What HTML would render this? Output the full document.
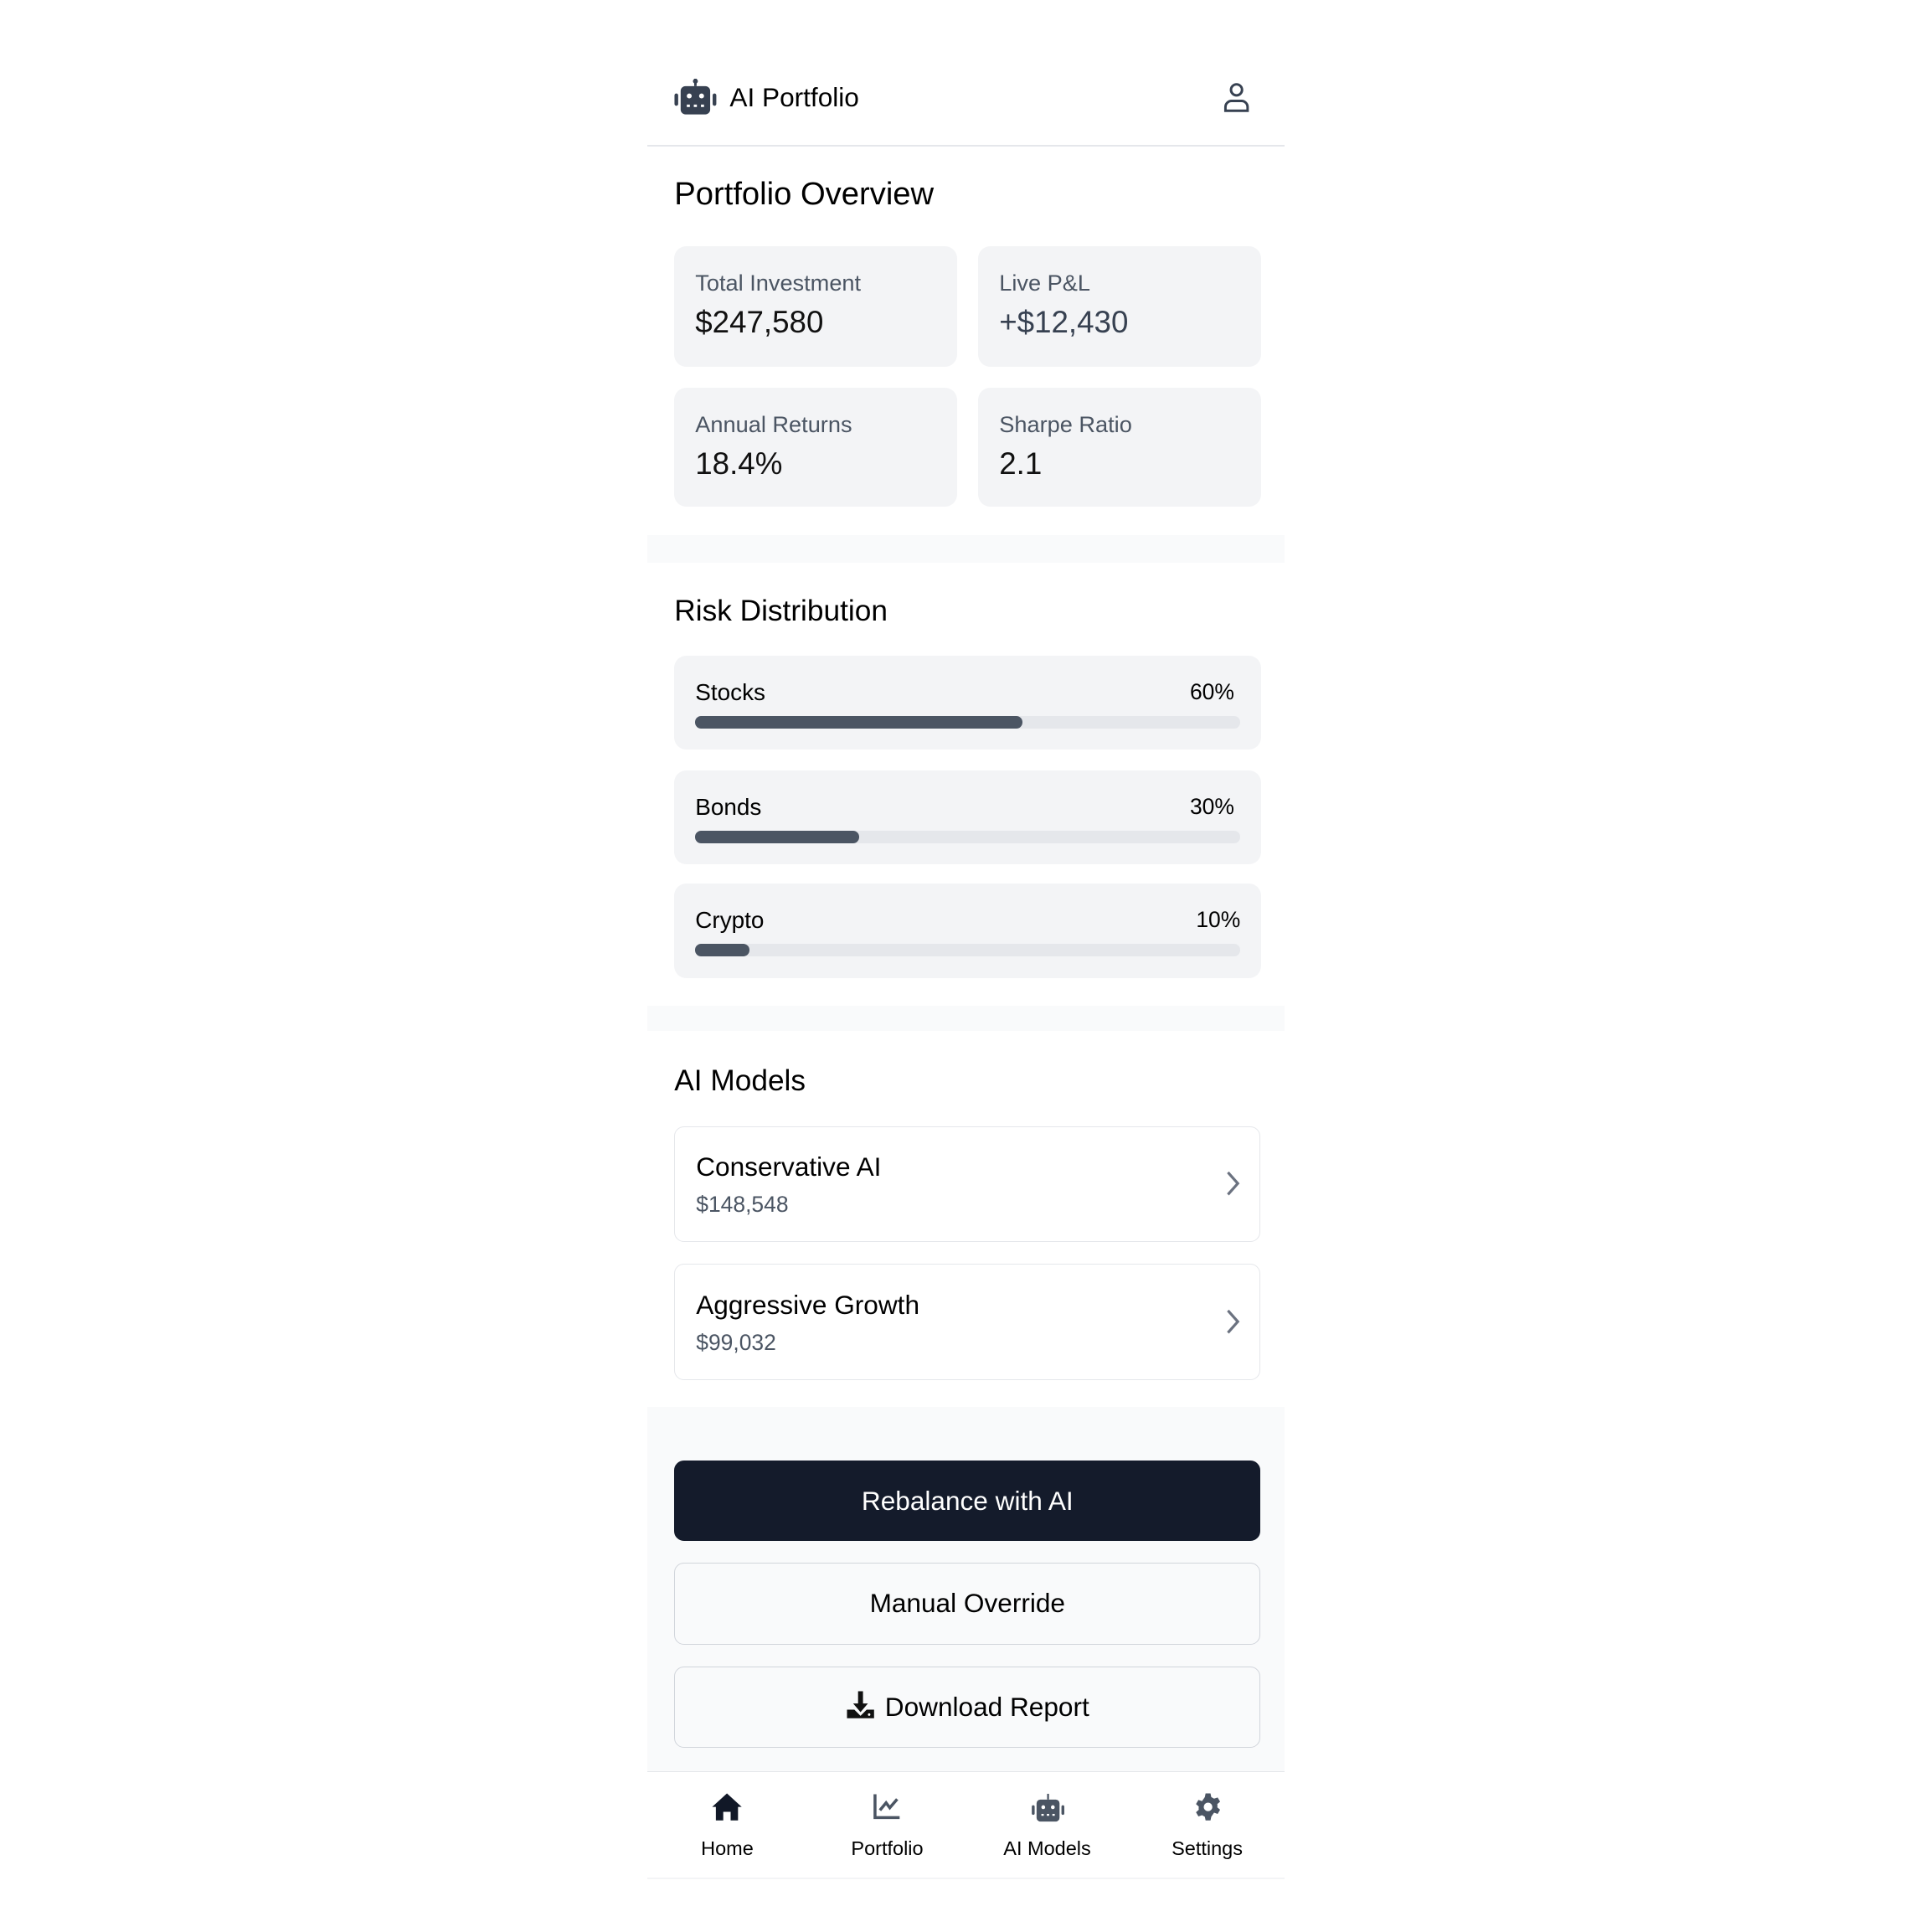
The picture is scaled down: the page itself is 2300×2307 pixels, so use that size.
<!DOCTYPE html>
<html><head><meta charset="utf-8"><style>
html,body{margin:0;padding:0;background:#fff;width:2300px;height:2300px;overflow:hidden}
#w{position:absolute;left:0;top:0;width:1570px;height:1570px;zoom:1.4695;font-family:"Liberation Sans",sans-serif;color:#111827}
.a{position:absolute}
.card{position:absolute;background:#f3f4f6;border-radius:10px}
.lbl{position:absolute;left:17px;top:19px;font-size:18.5px;color:#4b5563}
.val{position:absolute;left:17px;top:48px;font-size:25px;color:#111}
.h2{position:absolute;left:548px;font-size:25px;color:#000}
.band{position:absolute;left:526px;width:518px;background:#f9fafb}
.bar{position:absolute;left:17px;right:17px;top:49px;height:10px;border-radius:5px;background:#e5e7eb}
.bar i{display:block;height:10px;border-radius:5px;background:#4b5563}
.bl{position:absolute;left:17px;top:19px;font-size:19px;color:#000}
.bp{position:absolute;right:22px;top:19px;font-size:18px;color:#000}
.mc{position:absolute;left:548px;width:475px;height:93px;border:1px solid #e5e7eb;border-radius:8px;background:#fff}
.mn{position:absolute;left:17px;top:20px;font-size:21.5px;color:#000}
.mp{position:absolute;left:17px;top:53px;font-size:18px;color:#4b5563}
.btn{position:absolute;left:548px;width:475px;height:65px;border:1px solid #d1d5db;border-radius:8px;background:#f9fafb;text-align:center;line-height:65px;font-size:21.5px;color:#000}
.nl{position:absolute;top:1493px;font-size:16px;color:#000;width:130px;text-align:center}
</style></head><body><div id="w">
<div class="a" style="left:526px;top:118px;width:518px;height:1px;background:#e5e7eb"></div>
<svg class="a" style="left:547px;top:64px" width="36" height="30" viewBox="0 0 36 30"><rect x="17" y="0" width="2" height="6" fill="#374151"/><circle cx="18" cy="2" r="2" fill="#374151"/><rect x="6" y="6" width="24" height="23" rx="4" fill="#374151"/><rect x="1" y="12" width="3" height="10" rx="1.5" fill="#374151"/><rect x="32" y="12" width="3" height="10" rx="1.5" fill="#374151"/><circle cx="13" cy="14" r="2" fill="#fff"/><circle cx="23" cy="14" r="2" fill="#fff"/><rect x="11" y="21" width="2.5" height="2" fill="#fff"/><rect x="16.7" y="21" width="2.5" height="2" fill="#fff"/><rect x="22.5" y="21" width="2.5" height="2" fill="#fff"/></svg>
<div class="a" style="left:593px;top:67px;font-size:21.5px;color:#000">AI Portfolio</div>
<svg class="a" style="left:993px;top:66px" width="24" height="26" viewBox="0 0 24 26" fill="none" stroke="#374151" stroke-width="2"><circle cx="12" cy="7" r="4.5"/><path d="M3 24v-3a5 5 0 0 1 5-5h8a5 5 0 0 1 5 5v3z"/></svg>
<div class="h2" style="top:143px;font-size:26px">Portfolio Overview</div>
<div class="card" style="left:548px;top:200px;width:230px;height:98px"><div class="lbl">Total Investment</div><div class="val">$247,580</div></div>
<div class="card" style="left:795px;top:200px;width:230px;height:98px"><div class="lbl">Live P&amp;L</div><div class="val" style="color:#374151">+$12,430</div></div>
<div class="card" style="left:548px;top:315px;width:230px;height:97px"><div class="lbl">Annual Returns</div><div class="val">18.4%</div></div>
<div class="card" style="left:795px;top:315px;width:230px;height:97px"><div class="lbl">Sharpe Ratio</div><div class="val">2.1</div></div>
<div class="band" style="top:435px;height:22px"></div>
<div class="h2" style="top:483px;font-size:24px">Risk Distribution</div>
<div class="card" style="left:548px;top:533px;width:477px;height:76px"><div class="bl">Stocks</div><div class="bp">60%</div><div class="bar"><i style="width:60%"></i></div></div>
<div class="card" style="left:548px;top:626px;width:477px;height:76px"><div class="bl">Bonds</div><div class="bp">30%</div><div class="bar"><i style="width:30%"></i></div></div>
<div class="card" style="left:548px;top:718px;width:477px;height:77px"><div class="bl">Crypto</div><div class="bp" style="right:17px">10%</div><div class="bar"><i style="width:10%"></i></div></div>
<div class="band" style="top:817px;height:21px"></div>
<div class="h2" style="top:865px;font-size:24px">AI Models</div>
<div class="mc" style="top:915px"><div class="mn">Conservative AI</div><div class="mp">$148,548</div><svg class="a" style="left:446px;top:35px" width="14" height="22" viewBox="0 0 14 22"><path d="M3 2l8 9-8 9" fill="none" stroke="#6b7280" stroke-width="2.2"/></svg></div>
<div class="mc" style="top:1027px"><div class="mn">Aggressive Growth</div><div class="mp">$99,032</div><svg class="a" style="left:446px;top:35px" width="14" height="22" viewBox="0 0 14 22"><path d="M3 2l8 9-8 9" fill="none" stroke="#6b7280" stroke-width="2.2"/></svg></div>
<div class="band" style="top:1143px;height:296px"></div>
<div class="btn" style="top:1187px;background:#141b2b;border-color:#141b2b;color:#fff;height:64px;line-height:64px">Rebalance with AI</div>
<div class="btn" style="top:1270px">Manual Override</div>
<div class="btn" style="top:1354px"><svg style="vertical-align:-3px;margin-right:8px" width="24" height="24" viewBox="0 0 24 24" fill="#111"><path d="M10 1h4v10h4l-6 7-6-7h4z"/><path d="M1 16h6l5 5 5-5h6v7H1z"/><circle cx="19" cy="20" r="1" fill="#fff"/></svg>Download Report</div>
<div class="a" style="left:526px;top:1439px;width:518px;height:1px;background:#e5e7eb"></div>
<div class="a" style="left:526px;top:1526px;width:518px;height:1px;background:#f3f4f6"></div>
<svg class="a" style="left:578px;top:1456px" width="26" height="24" viewBox="0 0 26 24"><path d="M13 1L1 12h3v11h6v-7h6v7h6V12h3z" fill="#111827"/></svg>
<svg class="a" style="left:709px;top:1457px" width="24" height="22" viewBox="0 0 24 22" fill="none" stroke="#4b5563" stroke-width="2.4"><path d="M2 1v19h20"/><path d="M6 14l5-6 3 4 6-7"/></svg>
<svg class="a" style="left:838px;top:1456px" width="28" height="26" viewBox="0 0 36 30"><rect x="17" y="0" width="2" height="6" fill="#4b5563"/><rect x="6" y="6" width="24" height="23" rx="4" fill="#4b5563"/><rect x="1" y="12" width="3" height="10" rx="1.5" fill="#4b5563"/><rect x="32" y="12" width="3" height="10" rx="1.5" fill="#4b5563"/><circle cx="13" cy="14" r="2" fill="#fff"/><circle cx="23" cy="14" r="2" fill="#fff"/><rect x="11" y="21" width="2.5" height="2" fill="#fff"/><rect x="16.7" y="21" width="2.5" height="2" fill="#fff"/><rect x="22.5" y="21" width="2.5" height="2" fill="#fff"/></svg>
<svg class="a" style="left:970px;top:1456px" width="24" height="24" viewBox="0 0 24 24"><path fill="#4b5563" fill-rule="evenodd" d="M10 1h4l.6 3 2.3 1.3 2.9-1 2 3.4-2.3 2a7 7 0 0 1 0 2.6l2.3 2-2 3.4-2.9-1L14.6 20 14 23h-4l-.6-3-2.3-1.3-2.9 1-2-3.4 2.3-2a7 7 0 0 1 0-2.6l-2.3-2 2-3.4 2.9 1L9.4 4zM12 8.5a3.5 3.5 0 1 0 0 7 3.5 3.5 0 0 0 0-7z"/></svg>
<div class="nl" style="left:526px">Home</div>
<div class="nl" style="left:656px">Portfolio</div>
<div class="nl" style="left:786px">AI Models</div>
<div class="nl" style="left:916px">Settings</div>
</div></body></html>
